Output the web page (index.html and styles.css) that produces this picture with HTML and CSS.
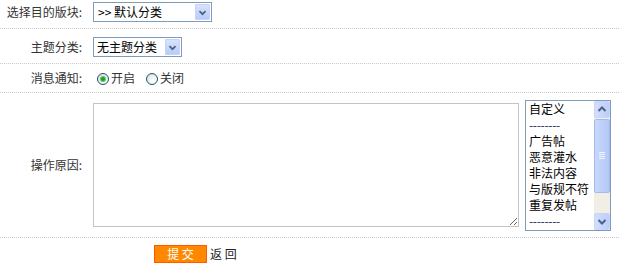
FILE: index.html
```html
<!DOCTYPE html>
<html lang="zh-CN">
<head>
<meta charset="utf-8">
<title>操作</title>
<link rel="stylesheet" href="styles.css">
</head>
<body>
<form class="form">
  <div class="row row1">
    <div class="label">选择目的版块:</div>
    <div class="field">
      <div class="select sel1">
        <span class="sel-text">&gt;&gt; 默认分类</span>
        <span class="sel-btn"><svg width="15" height="15" viewBox="0 0 15 15"><path d="M4 6 L7.5 9.5 L11 6" fill="none" stroke="#4d6185" stroke-width="2"/></svg></span>
      </div>
    </div>
  </div>
  <div class="row row2">
    <div class="label">主题分类:</div>
    <div class="field">
      <div class="select sel2">
        <span class="sel-text">无主题分类</span>
        <span class="sel-btn"><svg width="15" height="15" viewBox="0 0 15 15"><path d="M4 6 L7.5 9.5 L11 6" fill="none" stroke="#4d6185" stroke-width="2"/></svg></span>
      </div>
    </div>
  </div>
  <div class="row row3">
    <div class="label">消息通知:</div>
    <div class="field radios">
      <span class="radio checked"><span class="dot"></span></span><span class="rtext">开启</span>
      <span class="radio"></span><span class="rtext">关闭</span>
    </div>
  </div>
  <div class="row row4">
    <div class="label">操作原因:</div>
    <div class="field reason">
      <textarea class="ta"></textarea>
      <div class="listbox">
        <ul class="items">
          <li>自定义</li>
          <li class="dash">--------</li>
          <li>广告帖</li>
          <li>恶意灌水</li>
          <li>非法内容</li>
          <li>与版规不符</li>
          <li>重复发帖</li>
          <li class="dash">--------</li>
        </ul>
        <div class="sbar">
          <span class="sbtn"><svg width="14" height="15" viewBox="0 0 14 15"><path d="M3.5 9 L7 5.5 L10.5 9" fill="none" stroke="#4d6185" stroke-width="2"/></svg></span>
          <span class="thumb"><span class="grip"></span></span>
          <span class="track"></span>
          <span class="sbtn"><svg width="14" height="15" viewBox="0 0 14 15"><path d="M3.5 6 L7 9.5 L10.5 6" fill="none" stroke="#4d6185" stroke-width="2"/></svg></span>
        </div>
      </div>
    </div>
  </div>
  <div class="row row5">
    <div class="label"></div>
    <div class="field actions">
      <button type="button" class="submit">提 交</button>
      <span class="back">返 回</span>
    </div>
  </div>
</form>
</body>
</html>
```

FILE: styles.css
```css
html, body {
  margin: 0;
  padding: 0;
  background: #fff;
}
body {
  font-family: "Noto Sans CJK SC", "Liberation Sans", sans-serif;
  font-size: 12px;
  color: #333;
  width: 619px;
  height: 278px;
  overflow: hidden;
}
.form {
  margin: 0;
}
.row {
  display: flex;
  align-items: flex-start;
  border-bottom: 1px dotted #c8c8c8;
  box-sizing: border-box;
}
.label {
  width: 82px;
  flex: none;
  text-align: right;
  line-height: 20px;
  white-space: nowrap;
}
.field {
  padding-left: 11px;
  display: flex;
  align-items: center;
}
.row1 { height: 29px; padding-top: 2px; }
.row2 { height: 35px; padding-top: 8px; }
.row3 { height: 29px; padding-top: 5px; }
.row3 .label { line-height: 18px; }
.row4 { height: 145px; align-items: center; }
.row5 { border-bottom: none; padding-top: 7px; }

.select {
  box-sizing: border-box;
  height: 20px;
  border: 1px solid #7f9db9;
  display: flex;
  align-items: center;
  justify-content: space-between;
  padding: 1px;
  background: #fff;
  color: #000;
}
.sel1 { width: 119px; }
.sel2 { width: 89px; }
.sel-text {
  padding-left: 3px;
  line-height: 16px;
  white-space: nowrap;
}
.sel2 .sel-text { padding-left: 2px; }
.sel-btn {
  box-sizing: border-box;
  width: 15px;
  height: 16px;
  background: linear-gradient(#d7e2fd, #b9cbf7);
  border: 1px solid #c3d3fd;
  border-radius: 1px;
  display: flex;
  align-items: center;
  justify-content: center;
}
.sel-btn svg { display: block; }

.radios {
  height: 18px;
}
.radio {
  box-sizing: border-box;
  width: 12px;
  height: 12px;
  border-radius: 50%;
  border: 1px solid #1c5180;
  background: radial-gradient(circle at 65% 70%, #ffffff 0%, #f3f3ef 40%, #d8d8d0 100%);
  display: inline-flex;
  align-items: center;
  justify-content: center;
  margin-top: 2px;
  margin-left: 4px;
}
.radio .dot {
  width: 4px;
  height: 4px;
  border-radius: 50%;
  background: #21a121;
  box-shadow: 0 0 0 1px #5ec85e;
}
.rtext {
  margin-left: 2px;
  margin-right: 7px;
  line-height: 18px;
}

.reason {
  align-items: center;
}
.ta {
  box-sizing: border-box;
  width: 426px;
  height: 124px;
  border: 1px solid #c4c4c4;
  margin: 0;
  padding: 2px;
  font-family: inherit;
  font-size: 12px;
  resize: both;
  outline: none;
}
.listbox {
  box-sizing: border-box;
  width: 86px;
  height: 131px;
  margin-left: 6px;
  border: 1px solid #7f9db9;
  display: flex;
  background: #fff;
}
.items {
  list-style: none;
  margin: 0;
  padding: 0 0 0 3px;
  flex: 1;
  color: #000;
  overflow: hidden;
}
.items li {
  height: 16px;
  line-height: 16px;
  white-space: nowrap;
}
.items .dash {
  letter-spacing: -0.3px;
  color: #1a2a55;
}
.sbar {
  width: 16px;
  display: flex;
  flex-direction: column;
  background: #f1efe4;
}
.sbtn {
  box-sizing: border-box;
  width: 16px;
  height: 17px;
  background: linear-gradient(90deg, #d3defc, #bccdf8);
  border: 1px solid #c6d5fc;
  border-radius: 2px;
  display: flex;
  align-items: center;
  justify-content: center;
  flex: none;
}
.thumb {
  box-sizing: border-box;
  width: 16px;
  height: 74px;
  margin-top: 1px;
  background: linear-gradient(90deg, #c9d8fc, #b4c8f8);
  border: 1px solid #a4bbf0;
  border-radius: 2px;
  display: flex;
  align-items: center;
  justify-content: center;
  flex: none;
}
.grip {
  width: 6px;
  height: 7px;
  background: repeating-linear-gradient(#eef3fe 0 1px, transparent 1px 2px);
}
.track {
  flex: 1;
}

.actions {
  padding-left: 72px;
  gap: 3px;
}
.submit {
  box-sizing: border-box;
  width: 53px;
  height: 18px;
  margin: 0;
  padding: 0;
  border: 1px solid #ff5a00;
  background: #ff8800;
  color: #fff;
  font-family: inherit;
  font-size: 12px;
  line-height: 16px;
  cursor: pointer;
}
.back {
  line-height: 18px;
  color: #222;
}
```
